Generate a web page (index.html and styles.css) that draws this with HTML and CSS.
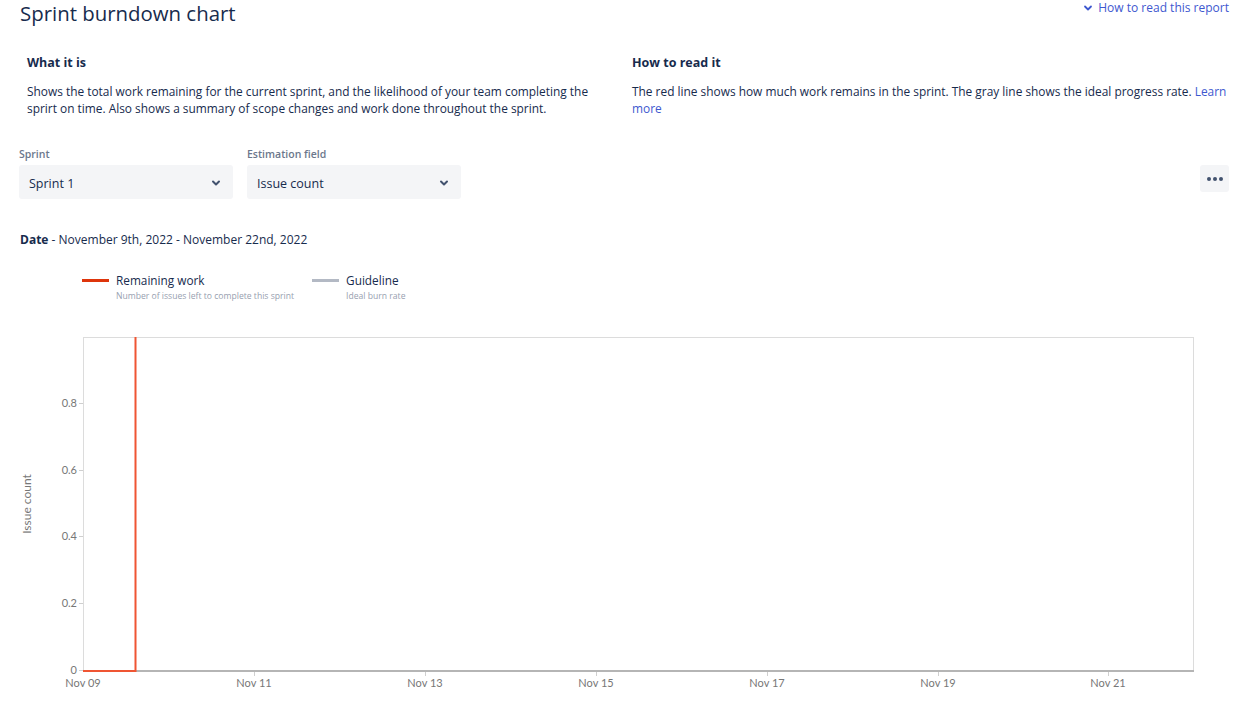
FILE: index.html
```html
<!DOCTYPE html>
<html lang="en">
<head>
<meta charset="utf-8">
<title>Sprint burndown chart</title>
<link rel="stylesheet" href="styles.css">
</head>
<body>
<header class="top">
  <h1 class="title">Sprint burndown chart</h1>
  <a class="howto" href="#">
    <svg class="chev-sm" width="10" height="10" viewBox="0 0 10 10"><path d="M2 3.5 L5 6.5 L8 3.5" fill="none" stroke="currentColor" stroke-width="1.8" stroke-linecap="round" stroke-linejoin="round"/></svg>
    How to read this report
  </a>
</header>

<section class="info">
  <div class="info-col">
    <h2 class="info-title">What it is</h2>
    <p class="info-text">Shows the total work remaining for the current sprint, and the likelihood of your team completing the sprirt on time. Also shows a summary of scope changes and work done throughout the sprint.</p>
  </div>
  <div class="info-col">
    <h2 class="info-title">How to read it</h2>
    <p class="info-text">The red line shows how much work remains in the sprint. The gray line shows the ideal progress rate. <a class="learn" href="#">Learn more</a></p>
  </div>
</section>

<div class="filters">
  <div class="field">
    <label class="field-label">Sprint</label>
    <div class="select"><span>Sprint 1</span>
      <svg class="chev" width="12" height="12" viewBox="0 0 12 12"><path d="M3 4.5 L6 7.5 L9 4.5" fill="none" stroke="currentColor" stroke-width="2" stroke-linecap="round" stroke-linejoin="round"/></svg>
    </div>
  </div>
  <div class="field">
    <label class="field-label">Estimation field</label>
    <div class="select"><span>Issue count</span>
      <svg class="chev" width="12" height="12" viewBox="0 0 12 12"><path d="M3 4.5 L6 7.5 L9 4.5" fill="none" stroke="currentColor" stroke-width="2" stroke-linecap="round" stroke-linejoin="round"/></svg>
    </div>
  </div>
  <button class="more" type="button" aria-label="More">
    <svg width="18" height="6" viewBox="0 0 18 6"><circle cx="3" cy="3" r="2" fill="#42526e"/><circle cx="9" cy="3" r="2" fill="#42526e"/><circle cx="15" cy="3" r="2" fill="#42526e"/></svg>
  </button>
</div>

<p class="date"><b>Date</b> - November 9th, 2022 - November 22nd, 2022</p>

<div class="legend">
  <div class="legend-item">
    <span class="swatch swatch-red"></span>
    <div class="legend-text">
      <div class="legend-name">Remaining work</div>
      <div class="legend-desc">Number of issues left to complete this sprint</div>
    </div>
  </div>
  <div class="legend-item">
    <span class="swatch swatch-gray"></span>
    <div class="legend-text">
      <div class="legend-name">Guideline</div>
      <div class="legend-desc">Ideal burn rate</div>
    </div>
  </div>
</div>

<svg class="chart" width="1242" height="383" viewBox="0 0 1242 383">
  <rect x="83.5" y="18.5" width="1110" height="333.5" fill="#fff" stroke="#dcdcdc" stroke-width="1"/>
  <line x1="83" y1="352" x2="1194" y2="352" stroke="#b5b5b5" stroke-width="2"/>
  <g class="ytick" stroke="#cfcfcf" stroke-width="1">
    <line x1="79" y1="84.5" x2="83" y2="84.5"/>
    <line x1="79" y1="151.5" x2="83" y2="151.5"/>
    <line x1="79" y1="217.5" x2="83" y2="217.5"/>
    <line x1="79" y1="284.5" x2="83" y2="284.5"/>
    <line x1="79" y1="351.5" x2="83" y2="351.5"/>
  </g>
  <g class="ylabels" font-size="11" fill="#777" text-anchor="end">
    <text x="77" y="88">0.8</text>
    <text x="77" y="155">0.6</text>
    <text x="77" y="221">0.4</text>
    <text x="77" y="288">0.2</text>
    <text x="77" y="355">0</text>
  </g>
  <g stroke="#cfcfcf" stroke-width="1">
    <line x1="254.5" y1="353" x2="254.5" y2="357"/>
    <line x1="425.5" y1="353" x2="425.5" y2="357"/>
    <line x1="596.5" y1="353" x2="596.5" y2="357"/>
    <line x1="767.5" y1="353" x2="767.5" y2="357"/>
    <line x1="938.5" y1="353" x2="938.5" y2="357"/>
    <line x1="1108.5" y1="353" x2="1108.5" y2="357"/>
  </g>
  <g class="xlabels" font-size="11" fill="#777" text-anchor="middle">
    <text x="83" y="368">Nov 09</text>
    <text x="254" y="368">Nov 11</text>
    <text x="425" y="368">Nov 13</text>
    <text x="596" y="368">Nov 15</text>
    <text x="767" y="368">Nov 17</text>
    <text x="938" y="368">Nov 19</text>
    <text x="1108" y="368">Nov 21</text>
  </g>
  <polyline points="83,352 135.5,352 135.5,18" fill="none" stroke="#ef5533" stroke-width="2"/>
  <text class="yaxis" x="0" y="0" transform="translate(31,185) rotate(-90)" text-anchor="middle" font-size="12" fill="#777">Issue count</text>
</svg>
</body>
</html>
```

FILE: styles.css
```css
* { box-sizing: border-box; }
html, body { margin: 0; padding: 0; background: #fff; }
body {
  font-family: "Open Sans", "Noto Sans", sans-serif;
  color: #172b4d;
  width: 1242px;
  height: 703px;
  overflow: hidden;
}
a { text-decoration: none; }

.top {
  display: flex;
  justify-content: space-between;
  align-items: flex-start;
  padding: 0 13px 0 20px;
}
.title {
  margin: 0;
  font-size: 20.4px;
  font-weight: 400;
  line-height: 26px;
  color: #172b4d;
}
.howto {
  display: flex;
  align-items: center;
  gap: 5px;
  font-size: 12px;
  line-height: 14px;
  color: #3e58cf;
  margin-top: 1px;
}
.chev-sm { color: #3e58cf; }

.info {
  display: grid;
  grid-template-columns: 580px 1fr;
  column-gap: 25px;
  padding: 28px 8px 0 27px;
}
.info-title {
  margin: 0;
  font-size: 12.5px;
  font-weight: 700;
  line-height: 18px;
}
.info-text {
  margin: 11px 0 0;
  font-size: 11.9px;
  line-height: 17px;
  color: #172b4d;
}
.learn { color: #3e58cf; }

.filters {
  display: flex;
  align-items: flex-end;
  gap: 14px;
  padding: 0 13px 0 19px;
  margin-top: 30px;
}
.field { display: flex; flex-direction: column; width: 214px; }
.field-label {
  font-size: 10.5px;
  font-weight: 600;
  color: #6b778c;
  line-height: 14px;
  margin-bottom: 4px;
}
.select {
  height: 34px;
  background: #f4f5f7;
  border-radius: 3px;
  display: flex;
  align-items: center;
  justify-content: space-between;
  padding: 2px 11px 0 10px;
  font-size: 12.5px;
  color: #172b4d;
}
.chev { color: #42526e; }
.more {
  margin-left: auto;
  width: 29px;
  height: 27px;
  border: none;
  background: #f4f5f7;
  border-radius: 3px;
  display: flex;
  align-items: center;
  justify-content: center;
  padding: 0;
  align-self: flex-start;
  margin-top: 18px;
}

.date {
  margin: 32px 0 0 20px;
  font-size: 12px;
  line-height: 18px;
}
.date b { font-weight: 700; }

.legend {
  display: flex;
  gap: 18px;
  padding-left: 82px;
  margin-top: 23px;
}
.legend-item { display: flex; align-items: flex-start; gap: 7px; }
.swatch { display: block; width: 27px; height: 3px; margin-top: 7px; }
.swatch-red { background: #de350b; }
.swatch-gray { background: #b3b9c4; }
.legend-name { font-size: 11.8px; line-height: 16px; color: #172b4d; }
.legend-desc { font-size: 8.6px; line-height: 12px; color: #97a0af; margin-top: 2px; }

.chart { display: block; margin-top: 17px; font-family: "Lato", "Open Sans", sans-serif; }
```
